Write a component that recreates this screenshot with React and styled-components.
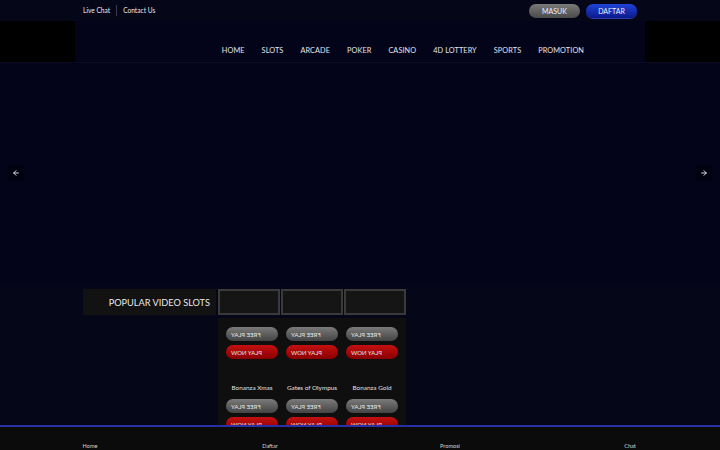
import React from "react";
import styled, { createGlobalStyle } from "styled-components";
import { ArrowLeft, ArrowRight } from "lucide-react";

const Global = createGlobalStyle`
  html, body { margin: 0; padding: 0; background: #050618; }
  body { font-family: Lato, "Open Sans", sans-serif; color: #e6e6e6; overflow: hidden; }
  * { box-sizing: border-box; }
`;

const Page = styled.div`
  width: 720px;
  height: 450px;
  background: #050618;
  position: relative;
  overflow: hidden;
`;

const TopBar = styled.div`
  height: 21px;
  width: 554px;
  margin: 0 auto;
  display: flex;
  align-items: center;
  justify-content: space-between;
`;

const TopLinks = styled.div`
  display: flex;
  align-items: center;
  font-size: 6.6px;
  color: #e8e8ee;
`;

const TopLink = styled.span`
  padding: 0 6px;
  &:first-child { padding-left: 0; }
  & + & { border-left: 1px solid #3a3b50; }
  line-height: 11px;
`;

const AuthGroup = styled.div`
  display: flex;
  gap: 6px;
`;

const AuthButton = styled.button`
  width: 51px;
  height: 14px;
  border-radius: 7px;
  border: none;
  font-family: inherit;
  font-size: 7px;
  color: #eef;
  padding: 0;
  background: ${(p) =>
    p.$blue
      ? "linear-gradient(#2143d8, #0b1a8a)"
      : "linear-gradient(#7a7a7a, #4a4a4a)"};
  box-shadow: ${(p) => (p.$blue ? "0 1px 0 #2a3cb0" : "none")};
`;

const Header = styled.div`
  height: 42px;
  display: flex;
  border-bottom: 1px solid #0b0c22;
`;

const LogoBlock = styled.div`
  width: 75px;
  background: #000;
`;

const HeaderMid = styled.div`
  flex: 1;
  display: flex;
  align-items: flex-end;
  justify-content: flex-end;
  padding: 0 61px 6px 0;
  background: #03041a;
`;

const Nav = styled.nav`
  display: flex;
  gap: 17px;
`;

const NavItem = styled.span`
  font-size: 7.3px;
  color: #e4e4ea;
  letter-spacing: 0.1px;
  line-height: 10px;
`;

const Banner = styled.div`
  height: 224px;
  position: relative;
  background: #03041a;
`;

const ArrowBtn = styled.div`
  position: absolute;
  top: 102px;
  ${(p) => (p.$right ? "right: 8px;" : "left: 8px;")}
  width: 16px;
  height: 16px;
  display: flex;
  align-items: center;
  justify-content: center;
  background: #010210;
  border-radius: 2px;
  color: #d8d8e0;
`;

const SlotsSection = styled.div`
  width: 554px;
  margin: 2px auto 0;
  display: grid;
  grid-template-columns: 135px 188px;
  column-gap: 0;
  row-gap: 3px;
`;

const SlotsTitle = styled.div`
  height: 26px;
  background: #121212;
  display: flex;
  align-items: center;
  justify-content: flex-end;
  padding-right: 6px;
  font-size: 9.2px;
  color: #e8e8e8;
  margin-right: 2px;
`;

const Thumbs = styled.div`
  display: flex;
  gap: 1px;
`;

const Thumb = styled.div`
  width: 62px;
  height: 26px;
  border: 2px solid #3a3a3a;
  background: #151515;
`;

const Panel = styled.div`
  grid-column: 2;
  background: #0f0f0f;
  padding: 9px 8px 0;
  display: grid;
  grid-template-columns: repeat(3, 52px);
  column-gap: 8px;
  row-gap: 7px;
  height: 118px;
  overflow: hidden;
`;

const Card = styled.div`
  display: flex;
  flex-direction: column;
  gap: 4px;
`;

const PlayButton = styled.div`
  height: 14px;
  border-radius: 7px;
  display: flex;
  align-items: center;
  padding-left: 5px;
  font-size: 6px;
  color: #e6e6e6;
  background: ${(p) =>
    p.$red
      ? "linear-gradient(#c41010, #8a0000)"
      : "linear-gradient(#7a7a7a, #444)"};
`;

const Mirrored = styled.span`
  display: inline-block;
  transform: scaleX(-1);
`;

const GameName = styled.div`
  margin-top: 21px;
  text-align: center;
  font-size: 6.4px;
  color: #e0e0e0;
  line-height: 8px;
  white-space: nowrap;
`;

const BottomNav = styled.div`
  position: absolute;
  left: 0;
  right: 0;
  bottom: 0;
  height: 25px;
  border-top: 2px solid #2a2fa6;
  background: #0b0b0b;
  display: grid;
  grid-template-columns: repeat(4, 1fr);
  align-items: end;
  padding-bottom: 1px;
`;

const BottomItem = styled.div`
  text-align: center;
  font-size: 5.6px;
  color: #d4d4d4;
`;

const games = [
  "Bonanza Xmas",
  "Gates of Olympus",
  "Bonanza Gold",
  "Sweet Bonanza",
  "Starlight Princess",
  "Wild West Gold",
];

export default function App() {
  return (
    <Page>
      <Global />
      <TopBar>
        <TopLinks>
          <TopLink>Live Chat</TopLink>
          <TopLink>Contact Us</TopLink>
        </TopLinks>
        <AuthGroup>
          <AuthButton>MASUK</AuthButton>
          <AuthButton $blue>DAFTAR</AuthButton>
        </AuthGroup>
      </TopBar>
      <Header>
        <LogoBlock />
        <HeaderMid>
          <Nav>
            {["HOME", "SLOTS", "ARCADE", "POKER", "CASINO", "4D LOTTERY", "SPORTS", "PROMOTION"].map((n) => (
              <NavItem key={n}>{n}</NavItem>
            ))}
          </Nav>
        </HeaderMid>
        <LogoBlock />
      </Header>
      <Banner>
        <ArrowBtn>
          <ArrowLeft size={8} strokeWidth={3} />
        </ArrowBtn>
        <ArrowBtn $right>
          <ArrowRight size={8} strokeWidth={3} />
        </ArrowBtn>
      </Banner>
      <SlotsSection>
        <SlotsTitle>POPULAR VIDEO SLOTS</SlotsTitle>
        <Thumbs>
          <Thumb />
          <Thumb />
          <Thumb />
        </Thumbs>
        <Panel>
          {games.map((g) => (
            <Card key={g}>
              <PlayButton>
                <Mirrored>FREE PLAY</Mirrored>
              </PlayButton>
              <PlayButton $red>
                <Mirrored>PLAY NOW</Mirrored>
              </PlayButton>
              <GameName>{g}</GameName>
            </Card>
          ))}
        </Panel>
      </SlotsSection>
      <BottomNav>
        <BottomItem>Home</BottomItem>
        <BottomItem>Daftar</BottomItem>
        <BottomItem>Promosi</BottomItem>
        <BottomItem>Chat</BottomItem>
      </BottomNav>
    </Page>
  );
}
